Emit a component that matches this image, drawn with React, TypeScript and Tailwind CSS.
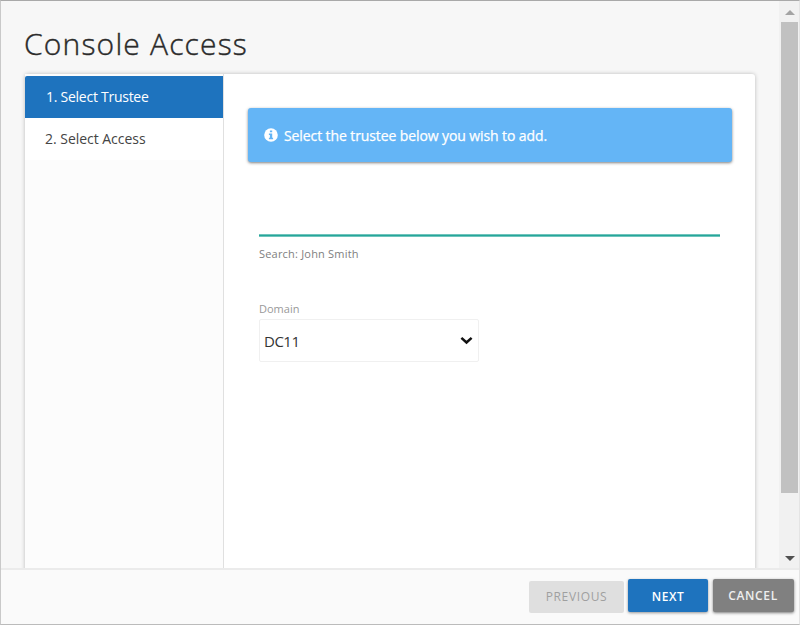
import React from "react";

function InfoIcon() {
  return (
    <svg viewBox="0 0 14 14" className="h-[14px] w-[14px] shrink-0">
      <circle cx="7" cy="7" r="6.8" fill="#fff" />
      <path d="M5.9 2.4h2.3v1.9H5.9zM4.9 5.4h3.3v4.4h.9v1.5H4.9V9.8h1V6.9h-1z" fill="#64b5f6" />
    </svg>
  );
}

function Scrollbar() {
  return (
    <div className="flex w-[20px] shrink-0 flex-col items-center bg-[#f1f1f1]">
      <div className="flex h-[21px] w-full shrink-0 items-center justify-center">
        <svg viewBox="0 0 10 5" className="mt-[1px] ml-[1px] h-[5px] w-[10px]">
          <path d="M0 5L5 0l5 5z" fill="#a3a3a3" />
        </svg>
      </div>
      <div className="ml-[1px] h-[471px] w-[17px] shrink-0 bg-[#c1c1c1]" />
      <div className="flex w-full flex-1 items-end justify-center pb-[7px] pl-[1px]">
        <svg viewBox="0 0 10 5" className="h-[5px] w-[10px]">
          <path d="M0 0l5 5 5-5z" fill="#505050" />
        </svg>
      </div>
    </div>
  );
}

function Steps() {
  return (
    <nav className="w-[199px] shrink-0 border-r border-[#e0e0e0] bg-[#fcfcfc] pt-[2px] text-[14px]">
      <div className="h-[42px] rounded-tl-[2px] bg-[#1e73be] pl-[21px] leading-[42px] tracking-[-0.26px] text-white">
        1. Select Trustee
      </div>
      <div className="h-[42px] bg-white pl-[20px] leading-[42px] tracking-[-0.03px] text-[#444]">
        2. Select Access
      </div>
    </nav>
  );
}

export default function App() {
  return (
    <div className="flex h-[625px] w-[800px] flex-col overflow-hidden border border-t-[#a9a9a9] border-r-[#e4e4e4] border-b-[#bbb] border-l-[#c9c9c9] bg-[#fafafa] font-['Open_Sans','Noto_Sans',sans-serif] whitespace-nowrap">
      <div className="flex h-[567px] shrink-0 overflow-hidden">
        <main className="flex-1 overflow-hidden bg-[#f7f7f7] pl-[24px]">
          <h1 className="-ml-[1px] h-[73px] pt-[23px] text-[30px] leading-[40px] font-light tracking-[1.18px] text-[#2a2a2a] [-webkit-text-stroke:0.4px_#2a2a2a]">
            Console Access
          </h1>
          <div className="flex h-[520px] w-[730px] rounded-[3px] bg-white shadow-[0_0_4px_rgba(0,0,0,0.24)]">
            <Steps />
            <section className="flex-1 pt-[34px] pl-[24px]">
              <div className="flex h-[54px] w-[484px] items-center rounded-[3px] bg-[#64b5f6] pl-[16px] text-[14px] text-white shadow-[0_1px_3px_rgba(0,0,0,0.5)]">
                <InfoIcon />
                <span className="ml-[6px] font-medium tracking-[-0.1px] [-webkit-text-stroke:0.25px_#fff]">
                  Select the trustee below you wish to add.
                </span>
              </div>
              <div className="ml-[11px]">
                <div className="mt-[72px] h-[3px] w-[461px] border-t border-b border-[#6fc4bc] bg-[#26a69a]" />
                <div className="mt-[9px] h-[16px] text-[11px] leading-[16px] tracking-[0.2px] text-[#808080]">
                  Search: John Smith
                </div>
                <div className="mt-[39px] h-[16px] text-[11px] leading-[16px] text-[#999]">Domain</div>
                <div className="mt-[2px] flex h-[43px] w-[220px] items-center justify-between rounded-[2px] border border-[#f0f0f0] pr-[5px] pl-[4px] text-[15px] text-[#333]">
                  <span className="pt-[1px] tracking-[-0.5px]">DC11</span>
                  <svg viewBox="0 0 13 9" className="h-[9px] w-[13px]">
                    <path d="M1.4 1.8l5.1 4.7 5.1-4.7" fill="none" stroke="#111" strokeWidth="2.5" />
                  </svg>
                </div>
              </div>
            </section>
          </div>
        </main>
        <Scrollbar />
      </div>
      <footer className="flex flex-1 items-start justify-end border-t-2 border-[#ebebeb] pr-[5px] text-[12px] font-semibold">
        <div className="mt-[11px] h-[32px] w-[95px] rounded-[2px] bg-[#dfdfdf] text-center leading-[32px] font-normal tracking-[0.65px] text-[#9f9f9f]">
          PREVIOUS
        </div>
        <div className="mt-[9px] ml-[4px] h-[33px] w-[80px] rounded-[2px] bg-[#1e73be] text-center leading-[35px] tracking-[0.5px] text-white shadow-[0_1px_3px_rgba(0,0,0,0.4)]">
          NEXT
        </div>
        <div className="mt-[9px] ml-[5px] h-[33px] w-[81px] rounded-[2px] bg-[#808080] pr-[1px] text-center leading-[33px] tracking-[0.65px] text-[#eee] shadow-[0_1px_3px_rgba(0,0,0,0.5)]">
          CANCEL
        </div>
      </footer>
    </div>
  );
}
